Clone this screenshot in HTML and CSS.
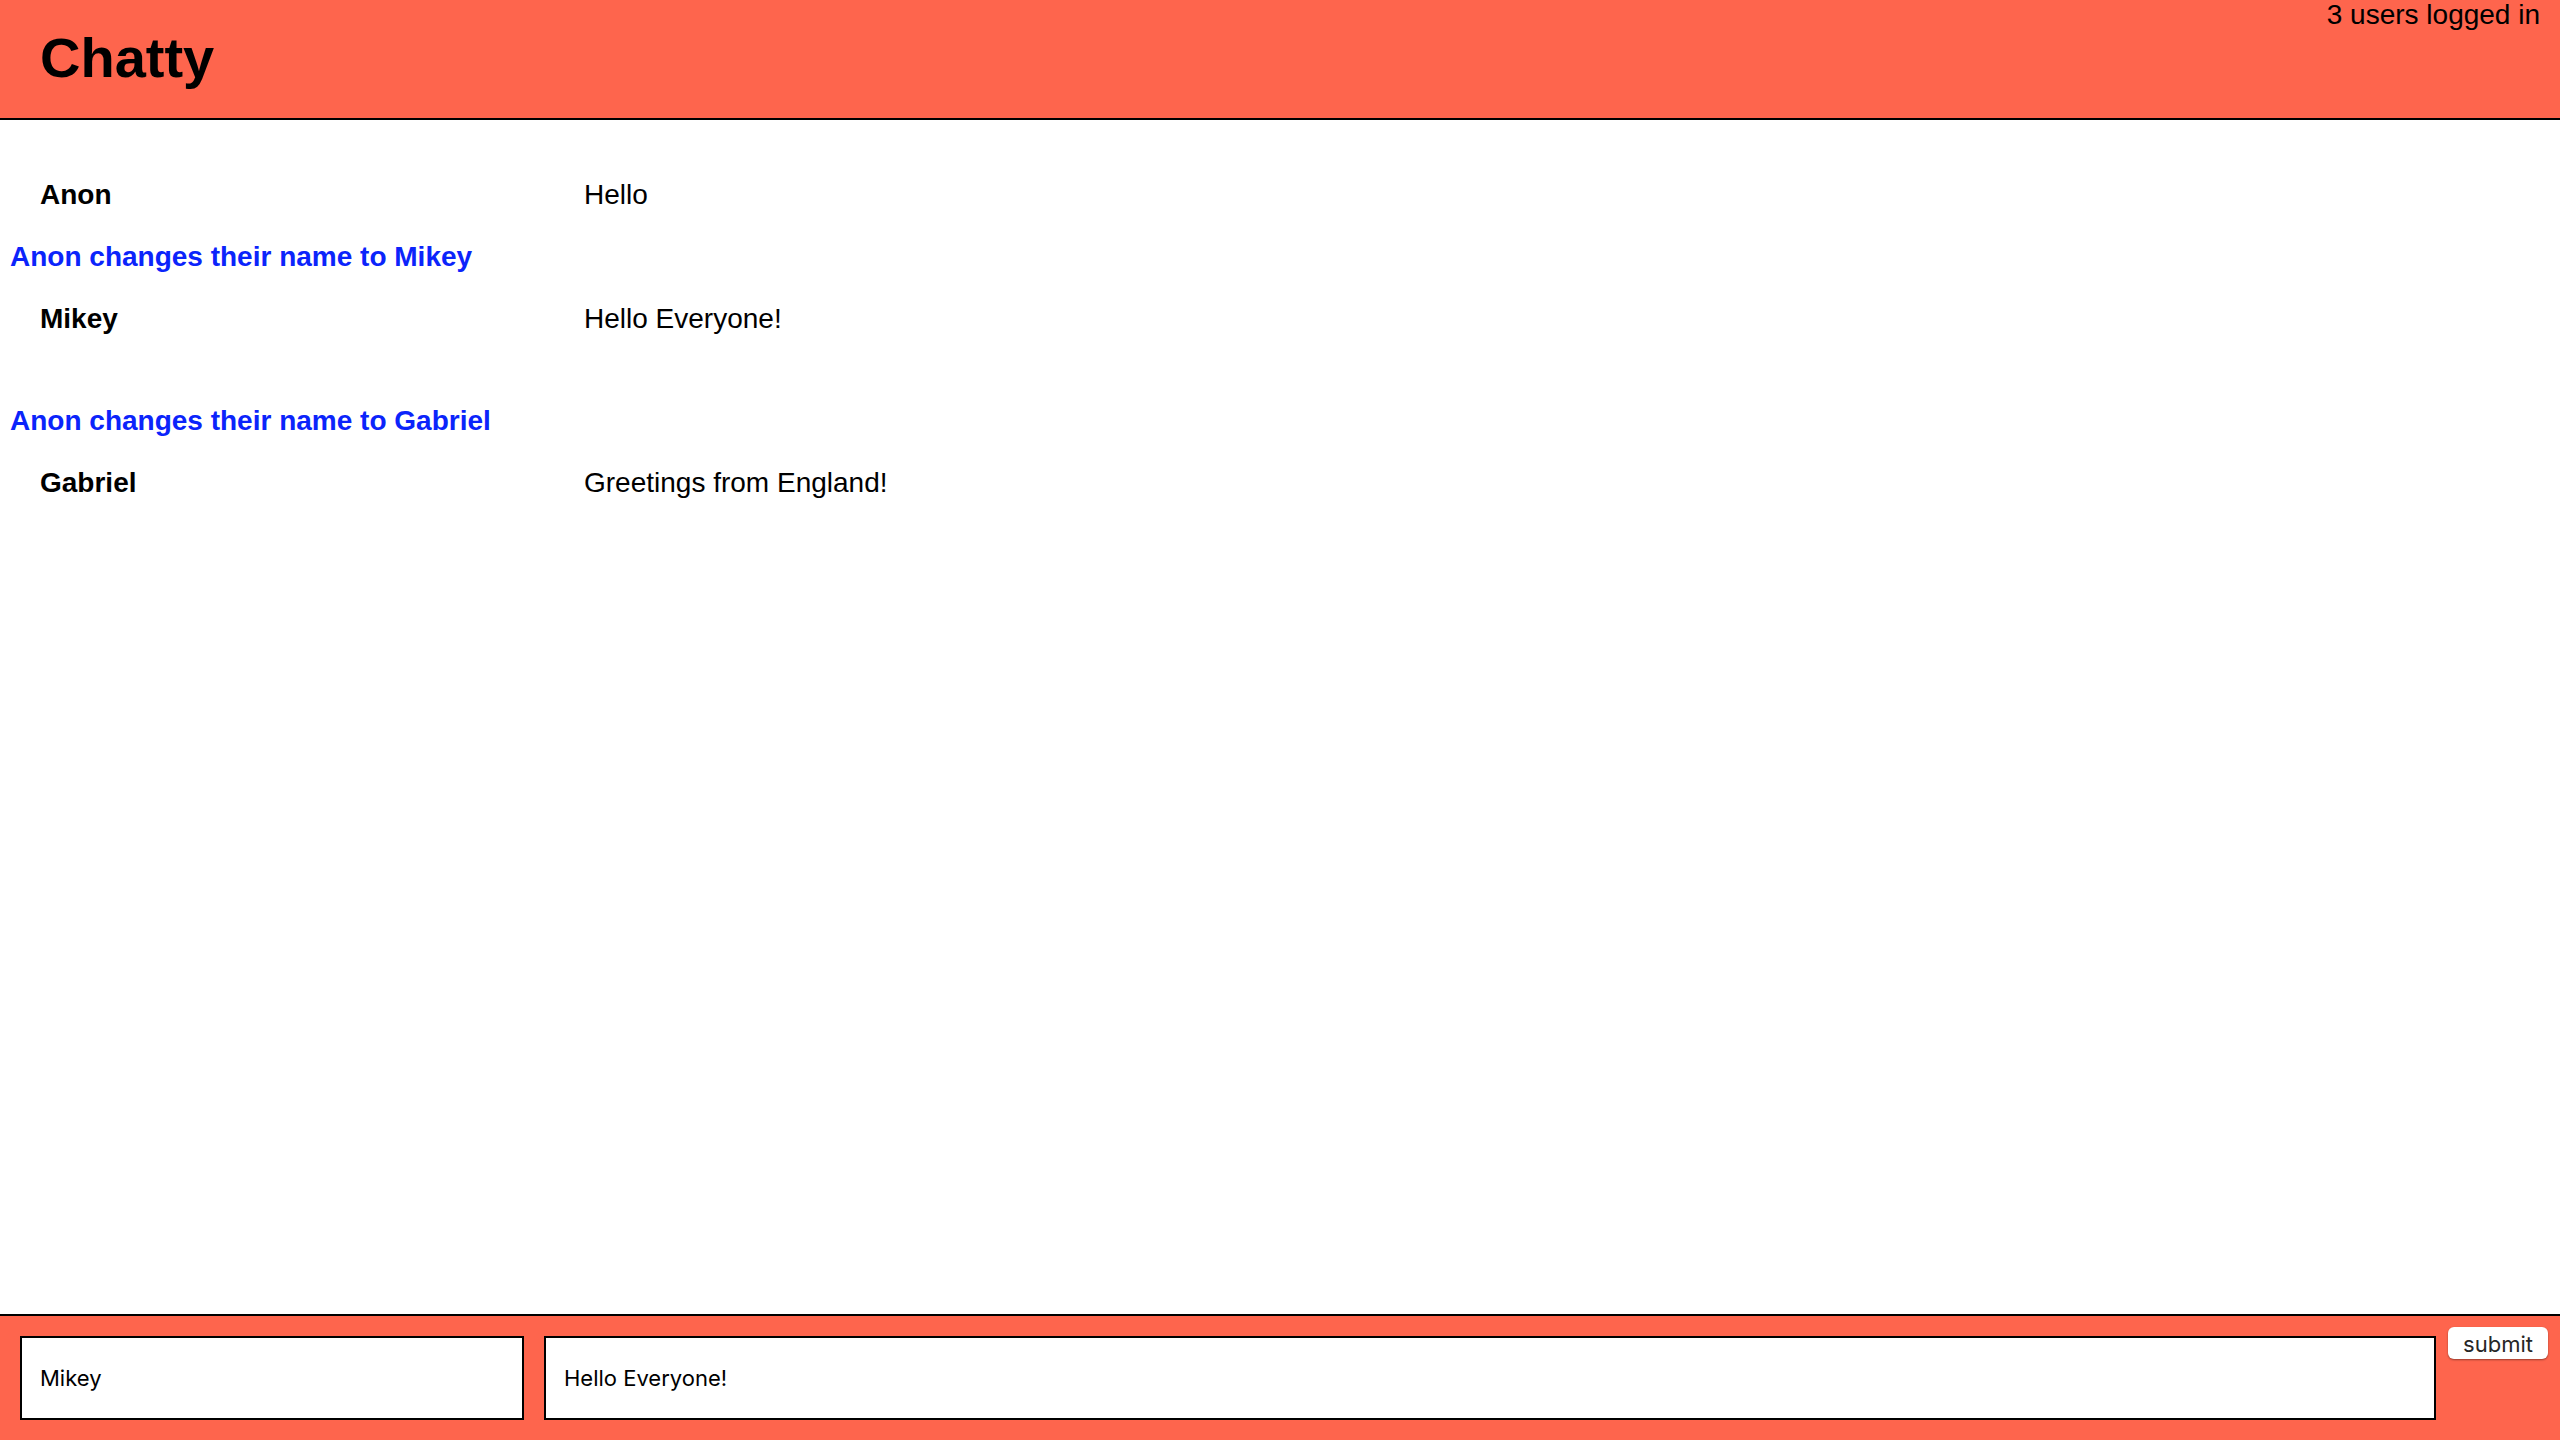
FILE: index.html
```
<!DOCTYPE html>
<html lang="en">
<head>
  <meta charset="utf-8">
  <title>Chatty</title>
  <link rel="stylesheet" href="styles.css">
</head>
<body>
  <header class="header">
    <h1 class="header-title">Chatty</h1>
    <p class="header-users">3 users logged in</p>
  </header>
  <main class="messages">
    <div class="message"><span class="message-name">Anon</span><span class="message-text">Hello</span></div>
    <div class="notice">Anon changes their name to Mikey</div>
    <div class="message"><span class="message-name">Mikey</span><span class="message-text">Hello Everyone!</span></div>
    <div class="message message-empty"></div>
    <div class="notice">Anon changes their name to Gabriel</div>
    <div class="message"><span class="message-name">Gabriel</span><span class="message-text">Greetings from England!</span></div>
  </main>
  <form class="chatbar">
    <div class="chatbar-fields">
      <input class="chatbar-input" type="text" name="username" aria-label="Your name" value="Mikey">
      <input class="chatbar-input" type="text" name="message" aria-label="Message" value="Hello Everyone!">
    </div>
    <button class="chatbar-submit" type="button">submit</button>
  </form>
</body>
</html>
```
FILE: styles.css
```
* {
  box-sizing: border-box;
}

body {
  display: flex;
  flex-direction: column;
  min-height: 100vh;
  margin: 0;
  background: #fff;
  color: #000;
  font-family: "Liberation Sans", Arial, sans-serif;
  font-size: 28px;
  line-height: 32px;
}

.header {
  display: flex;
  justify-content: space-between;
  align-items: flex-start;
  padding: 0 20px 0 40px;
  border-bottom: 2px solid #000;
  background: #fe654d;
}

.header-title {
  margin: 0;
  padding: 26px 0 28px;
  font-size: 56px;
  line-height: 64px;
}

.header-users {
  margin: 0;
  line-height: 30px;
}

.messages {
  display: flex;
  flex: 1;
  flex-direction: column;
  gap: 30px;
  padding: 59px 0 30px;
}

.message {
  display: grid;
  grid-template-columns: 34fr 121fr;
  padding: 0 40px;
}

.message-empty {
  min-height: 10px;
}

.message-name {
  font-weight: bold;
}

.notice {
  padding: 0 10px;
  color: #0b24fb;
  font-weight: bold;
}

.chatbar {
  display: flex;
  align-items: flex-start;
  gap: 12px;
  padding: 11px 12px 20px 20px;
  border-top: 2px solid #000;
  background: #fe654d;
}

.chatbar-fields {
  display: grid;
  flex: 1;
  grid-template-columns: 126fr 473fr;
  gap: 20px;
  padding-top: 9px;
}

.chatbar-input {
  width: 100%;
  min-width: 0;
  height: 84px;
  padding: 0 18px;
  border: 2px solid #000;
  border-radius: 0;
  background: #fff;
  color: #000;
  font-family: Inter, sans-serif;
  font-size: 22px;
}

.chatbar-submit {
  width: 100px;
  height: 32px;
  padding: 2px 0 0;
  border: 0;
  border-radius: 6px;
  background: #fff;
  box-shadow: 0 1px 2px rgba(0, 0, 0, 0.4);
  color: #262626;
  font-family: Inter, sans-serif;
  font-size: 22px;
  line-height: 30px;
}
```
